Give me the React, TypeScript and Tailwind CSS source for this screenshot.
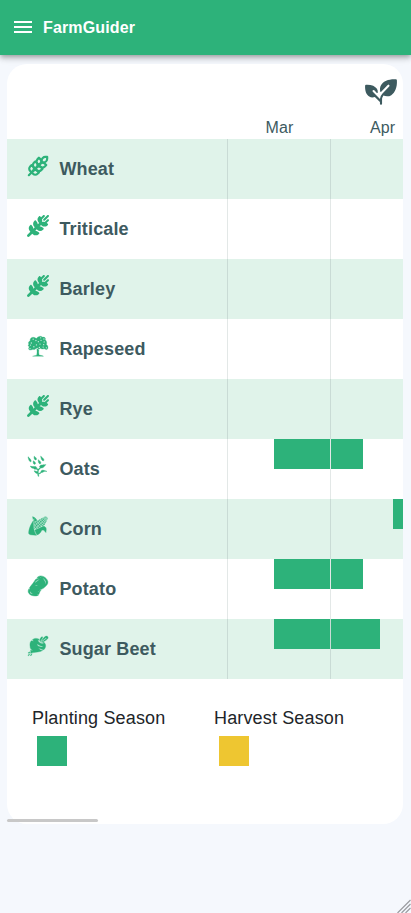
import type { IconType } from "react-icons";
import { GiBeet, GiCorn, GiFruitTree, GiPlantWatering, GiPotato } from "react-icons/gi";
import { FaWheatAwn } from "react-icons/fa6";
import { LuWheat } from "react-icons/lu";
import { PiPlantFill } from "react-icons/pi";

type Crop = { name: string; Icon: IconType; stroke?: number; bar?: string };

const crops: Crop[] = [
  { name: "Wheat", Icon: LuWheat, stroke: 2.4 },
  { name: "Triticale", Icon: FaWheatAwn },
  { name: "Barley", Icon: FaWheatAwn },
  { name: "Rapeseed", Icon: GiFruitTree, stroke: 6 },
  { name: "Rye", Icon: FaWheatAwn },
  { name: "Oats", Icon: GiPlantWatering, stroke: 10, bar: "ml-[47px] w-[89px]" },
  { name: "Corn", Icon: GiCorn, stroke: 10, bar: "ml-[166px] w-[10px]" },
  { name: "Potato", Icon: GiPotato, stroke: 10, bar: "ml-[47px] w-[89px]" },
  { name: "Sugar Beet", Icon: GiBeet, stroke: 8, bar: "ml-[47px] w-[106px]" },
];

function CropRow({ name, Icon, stroke = 0, bar }: Crop) {
  return (
    <div className="group flex h-[60px] odd:bg-[#e0f3ea]">
      <div className="flex w-[220px] shrink-0 pl-5">
        <Icon size={22} strokeWidth={stroke} className="mt-4 shrink-0 text-[#2db27a]" />
        <span className="ml-[10.4px] text-[18px] leading-[60px] font-bold tracking-[0.15px] text-[#3d5a5f]">
          {name}
        </span>
      </div>
      <div className="relative grow">
        {bar && <div className={`h-[30px] bg-[#2db27a] ${bar}`} />}
        <div className="absolute inset-y-0 left-0 w-px bg-[#e3e8e7] group-odd:bg-[#c9dbd5]" />
        <div className="absolute inset-y-0 left-[103px] w-px bg-[#e3e8e7] group-odd:bg-[#c9dbd5]" />
      </div>
    </div>
  );
}

function Legend({ label, color }: { label: string; color: string }) {
  return (
    <div className="w-[182px] shrink-0">
      <div className="text-[18px] leading-[27px] tracking-[0.15px] text-[#212529]">{label}</div>
      <div className={`mt-[4px] ml-[5px] size-[30px] ${color}`} />
    </div>
  );
}

export default function App() {
  return (
    <div className="flex h-[913px] w-full flex-col overflow-hidden bg-[#f5f8fd] font-['Liberation_Sans',Arial,sans-serif]">
      <header className="flex h-[55px] shrink-0 items-center bg-[#2db27a] pl-[14px] text-white shadow-[0_2px_4px_-1px_rgba(0,0,0,0.2),0_4px_5px_rgba(0,0,0,0.14),0_1px_10px_rgba(0,0,0,0.12)]">
        <div className="mb-px flex w-[18px] flex-col gap-[3px]">
          <div className="h-[2px] bg-white" />
          <div className="h-[2px] bg-white" />
          <div className="h-[2px] bg-white" />
        </div>
        <h1 className="ml-[11px] text-[16px] font-bold tracking-[0.15px]">FarmGuider</h1>
      </header>
      <main className="mt-[9px] ml-[7px] flex h-[760px] w-[396px] shrink-0 flex-col rounded-[20px] bg-white">
        <div className="flex h-[75px] flex-col">
          <PiPlantFill size={34} className="mt-[10px] ml-[357px] shrink-0 text-[#3d5a5f]" />
          <div className="mt-[8px] flex overflow-hidden pl-[221px] text-[16px] leading-[23px] tracking-[0.1px] text-[#3d5a5f]">
            <div className="w-[103px] shrink-0 text-center">Mar</div>
            <div className="w-[103px] shrink-0 text-center">Apr</div>
          </div>
        </div>
        <div>
          {crops.map((crop) => (
            <CropRow key={crop.name} {...crop} />
          ))}
        </div>
        <div className="mt-[26px] flex pl-[25px]">
          <Legend label="Planting Season" color="bg-[#2db27a]" />
          <Legend label="Harvest Season" color="bg-[#eec631]" />
        </div>
        <div className="mt-auto mb-[2px] h-[3px] w-[91px] rounded-full bg-[#c8c8c8]" />
      </main>
      <svg className="mt-auto ml-auto shrink-0" width="15" height="15" viewBox="0 0 15 15" stroke="#9a9ca0" strokeWidth="1.2">
        <path d="M1.5 15 14.5 2M5.5 15l9-9M9.5 15l5-5" />
      </svg>
    </div>
  );
}
